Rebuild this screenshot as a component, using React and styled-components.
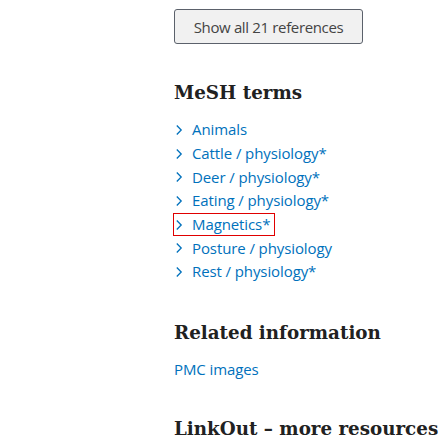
import React from "react";
import styled, { createGlobalStyle } from "styled-components";

const Global = createGlobalStyle`
  html, body { margin: 0; padding: 0; background: #fff; }
  body { font-family: "Open Sans", "Noto Sans", sans-serif; }
`;

const Page = styled.div`
  padding: 9px 0 0 174px;
  width: 448px;
  height: 448px;
  box-sizing: border-box;
  overflow: hidden;
`;

const ShowAll = styled.button`
  display: block;
  width: 189px;
  height: 35px;
  box-sizing: border-box;
  border: 1px solid #5b616b;
  border-radius: 3px;
  background: #f1f1f1;
  color: #444;
  font-family: "Open Sans", sans-serif;
  font-size: 15px;
  letter-spacing: -0.35px;
  padding: 0;
  text-align: center;
`;

const Heading = styled.h2`
  margin: ${(p) => p.$top}px 0 0;
  font-family: "DejaVu Serif", serif;
  font-weight: bold;
  font-size: 18.3px;
  line-height: 24px;
  color: #212121;
  white-space: nowrap;
`;

const List = styled.ul`
  list-style: none;
  margin: 13px 0 0;
  padding: 0;
`;

const Item = styled.li`
  display: flex;
  align-items: center;
  height: 23.7px;
`;

const Term = styled.a`
  display: flex;
  align-items: center;
  gap: 9px;
  height: 21px;
  box-sizing: border-box;
  padding: 0 ${(p) => (p.$focus ? "4px" : "0")} 0 1px;
  color: #0071bc;
  text-decoration: none;
  font-size: 15px;
  letter-spacing: -0.1px;
  line-height: 21px;
  outline: ${(p) => (p.$focus ? "1px solid #e00000" : "none")};
  outline-offset: 0;
  svg { display: block; flex: none; }
`;

const Chevron = () => (
  <svg width="8" height="12" viewBox="0 0 8 12" aria-hidden="true">
    <path d="M1.8 1.5 L6.2 6 L1.8 10.5" fill="none" stroke="#0071bc" strokeWidth="1.3" />
  </svg>
);

const Link = styled.a`
  display: block;
  margin-top: ${(p) => p.$top}px;
  color: #0071bc;
  font-size: 15px;
  letter-spacing: -0.1px;
  line-height: 20px;
  text-decoration: none;
`;

const terms = [
  "Animals",
  "Cattle / physiology*",
  "Deer / physiology*",
  "Eating / physiology*",
  "Magnetics*",
  "Posture / physiology",
  "Rest / physiology*",
];

export default function App() {
  return (
    <>
      <Global />
      <Page>
        <ShowAll>Show all 21 references</ShowAll>
        <Heading $top={37}>MeSH terms</Heading>
        <List>
          {terms.map((t) => (
            <Item key={t}>
              <Term href="#" $focus={t === "Magnetics*"}>
                <Chevron />
                <span>{t}</span>
              </Term>
            </Item>
          ))}
        </List>
        <Heading $top={37}>Related information</Heading>
        <Link href="#" $top={14}>PMC images</Link>
        <Heading $top={38}>LinkOut – more resources</Heading>
      </Page>
    </>
  );
}
